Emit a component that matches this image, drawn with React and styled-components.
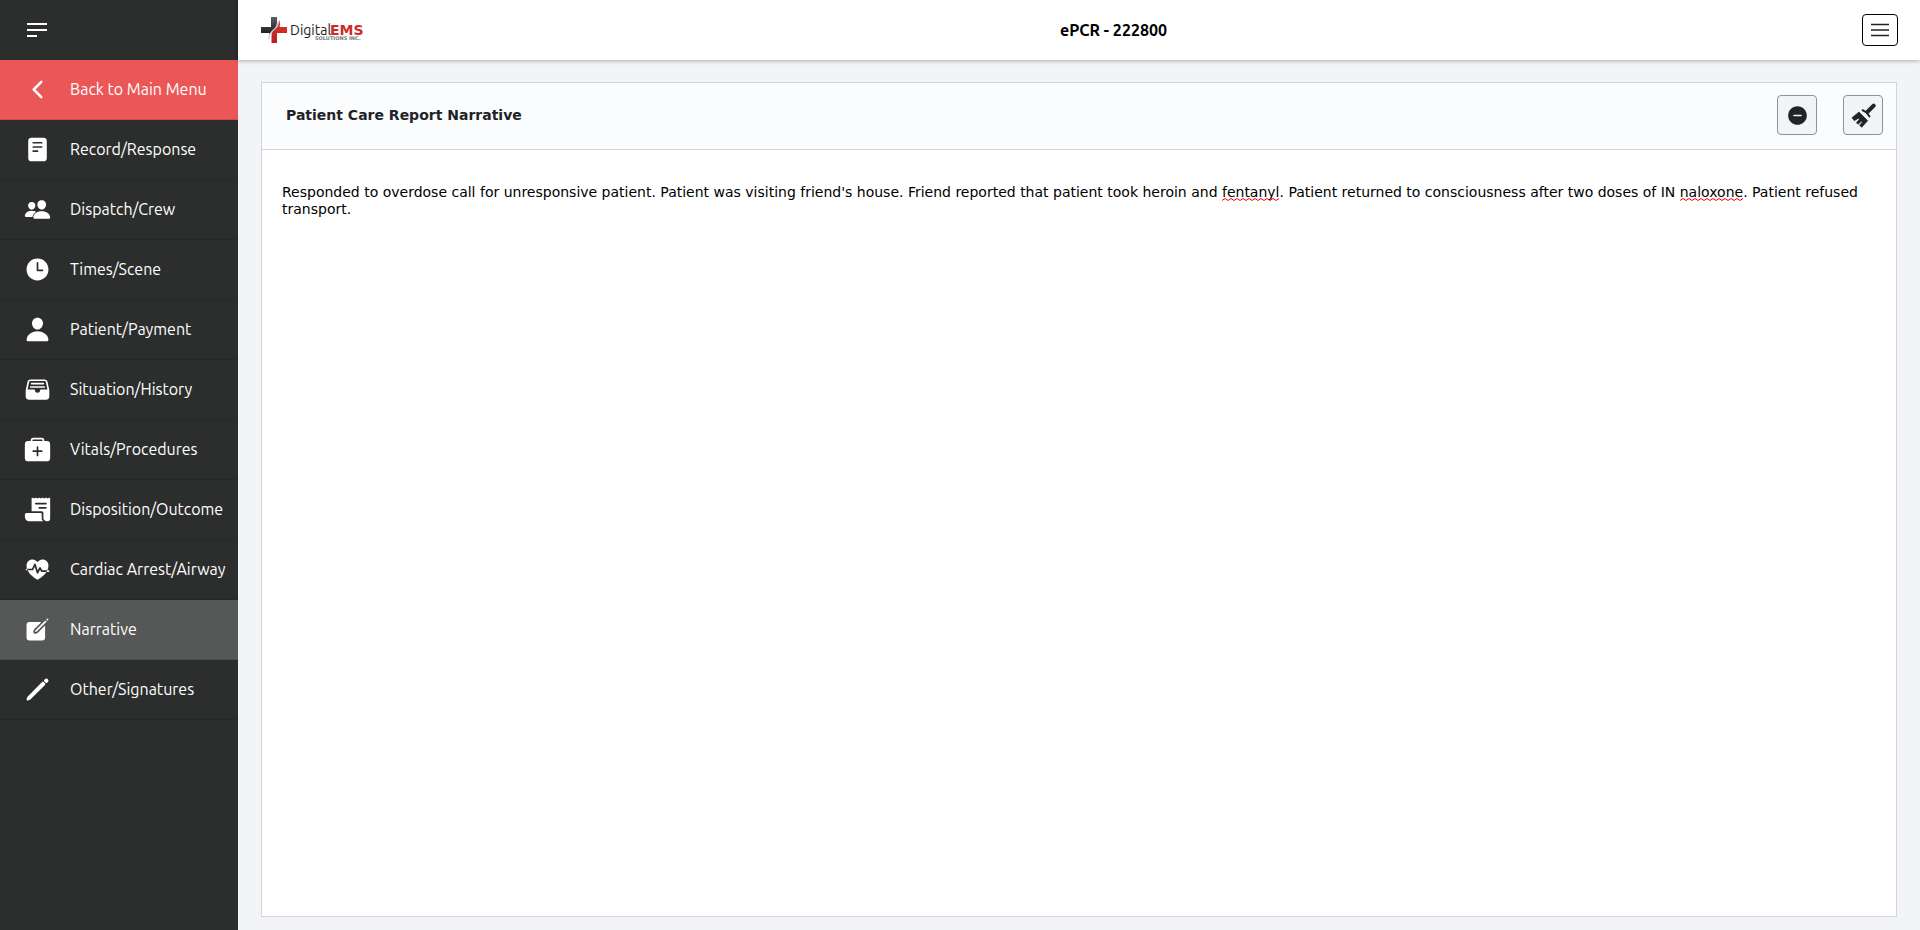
import React, { useLayoutEffect, useRef, useState } from 'react';
import styled, { createGlobalStyle } from 'styled-components';
import {
  IoChevronBack,
  IoCreate,
  IoFileTrayFull,
  IoFitness,
  IoMedkit,
  IoPencil,
  IoPeople,
  IoPerson,
  IoReader,
  IoReceipt,
  IoRemoveCircle,
  IoTime,
} from 'react-icons/io5';

const GlobalStyle = createGlobalStyle`
  *, *::before, *::after { box-sizing: border-box; }
  body {
    margin: 0;
    background: #f3f4f8;
    color: #212327;
    font-family: "DejaVu Sans", Verdana, sans-serif;
    font-size: 14px;
  }
  button { font: inherit; cursor: pointer; }
`;

const Shell = styled.div`
  display: grid;
  grid-template-columns: 238px minmax(0, 1fr);
  min-height: 100vh;
`;

const Sidebar = styled.nav`
  background: #2c2e2d;
  color: #fff;
`;

const CollapseButton = styled.button`
  display: flex;
  align-items: center;
  width: 100%;
  height: 60px;
  padding: 0 27px;
  border: 0;
  background: transparent;
  color: inherit;
`;

const NavList = styled.ul`
  margin: 0;
  padding: 0;
  list-style: none;
`;

const tones = { back: '#eb5757', active: '#565857', plain: 'transparent' };

const NavLink = styled.a`
  display: flex;
  align-items: center;
  gap: 19px;
  height: 60px;
  padding: 0 0 1px 24px;
  border-bottom: 1px solid rgba(0, 0, 0, 0.12);
  background: ${(p) => tones[p.$tone]};
  color: #fff;
  font-family: Ubuntu, Roboto, "Noto Sans", sans-serif;
  font-size: 16px;
  line-height: 24px;
  text-decoration: none;
  white-space: nowrap;

  svg { flex: none; width: 27px; height: 27px; }
`;

const Content = styled.div`
  display: flex;
  flex-direction: column;
  min-width: 0;
`;

const TopBar = styled.header`
  display: flex;
  align-items: center;
  justify-content: space-between;
  height: 60px;
  padding: 0 22px 0 23px;
  background: #fff;
  box-shadow: 0 1px 4px rgba(0, 0, 0, 0.3);
`;

const LogoLink = styled.a`
  display: flex;
`;

const PageTitle = styled.h1`
  margin: 0;
  color: #000;
  font-family: Ubuntu, "Noto Sans", sans-serif;
  font-size: 16px;
  line-height: 24px;
`;

const MenuButton = styled.button`
  display: flex;
  align-items: center;
  justify-content: center;
  width: 36px;
  height: 32px;
  padding: 0;
  border: 1px solid #000;
  border-radius: 4px;
  background: #fff;
  color: #212327;
`;

const Main = styled.main`
  display: flex;
  flex: 1;
  flex-direction: column;
  padding: 22px 23px 13px;
`;

const Card = styled.section`
  display: flex;
  flex: 1;
  flex-direction: column;
`;

const CardHeader = styled.div`
  display: flex;
  align-items: center;
  justify-content: space-between;
  height: 67px;
  padding: 0 13px 2px 24px;
  border: 1px solid #d3d5d8;
  border-bottom: 0;
  background: #fbfcfe;
`;

const CardTitle = styled.h2`
  margin: 0;
  font-size: 14px;
  line-height: 20px;
`;

const Actions = styled.div`
  display: flex;
  gap: 26px;
`;

const ActionButton = styled.button`
  display: flex;
  align-items: center;
  justify-content: center;
  width: 40px;
  height: 40px;
  padding: 0;
  border: 1px solid #8f9199;
  border-radius: 4px;
  background: #f3f4f8;
  color: #212327;
`;

const Editor = styled.div`
  position: relative;
  display: flex;
  flex: 1;
  border: 1px solid #d3d5d8;
  background: #fff;
`;

const NarrativeInput = styled.textarea`
  flex: 1;
  min-width: 0;
  padding: 34px 20px;
  border: 0;
  outline: 0;
  resize: none;
  overflow: hidden;
  background: transparent;
  color: #000;
  font-family: inherit;
  font-size: 14px;
  line-height: 17px;
`;

const SpellingMark = styled.svg`
  position: absolute;
  height: 3px;
  pointer-events: none;
`;

const navItems = [
  { label: 'Back to Main Menu', Icon: IoChevronBack, tone: 'back' },
  { label: 'Record/Response', Icon: IoReader },
  { label: 'Dispatch/Crew', Icon: IoPeople },
  { label: 'Times/Scene', Icon: IoTime },
  { label: 'Patient/Payment', Icon: IoPerson },
  { label: 'Situation/History', Icon: IoFileTrayFull },
  { label: 'Vitals/Procedures', Icon: IoMedkit },
  { label: 'Disposition/Outcome', Icon: IoReceipt },
  { label: 'Cardiac Arrest/Airway', Icon: IoFitness },
  { label: 'Narrative', Icon: IoCreate, tone: 'active' },
  { label: 'Other/Signatures', Icon: IoPencil },
];

const initialNarrative =
  "Responded to overdose call for unresponsive patient. Patient was visiting friend's house. Friend reported that patient took heroin and fentanyl. Patient returned to consciousness after two doses of IN naloxone. Patient refused transport.";

const unknownWords = /fentanyl|naloxone/g;

// Lays the text out in a temporary copy of the field to find where each unknown word falls.
function measureWords(field, text) {
  const style = getComputedStyle(field);
  const copy = document.createElement('div');
  Object.assign(copy.style, {
    position: 'fixed',
    top: '0',
    left: '0',
    visibility: 'hidden',
    width: `${field.offsetWidth}px`,
    padding: style.padding,
    fontFamily: style.fontFamily,
    fontSize: style.fontSize,
    lineHeight: style.lineHeight,
    whiteSpace: 'pre-wrap',
    overflowWrap: 'break-word',
  });
  copy.textContent = text;
  document.body.appendChild(copy);
  const marks = [...text.matchAll(unknownWords)].map((match) => {
    const range = document.createRange();
    range.setStart(copy.firstChild, match.index);
    range.setEnd(copy.firstChild, match.index + match[0].length);
    const box = range.getBoundingClientRect();
    return { left: Math.round(box.left), top: Math.round(box.bottom) - 2, width: Math.round(box.width) };
  });
  copy.remove();
  return marks;
}

function useSpellingMarks(fieldRef, text) {
  const [marks, setMarks] = useState([]);
  useLayoutEffect(() => {
    const field = fieldRef.current;
    const update = () => setMarks(measureWords(field, text));
    update();
    const observer = new ResizeObserver(update);
    observer.observe(field);
    return () => observer.disconnect();
  }, [fieldRef, text]);
  return marks;
}

function Squiggle({ left, top, width }) {
  const points = [];
  for (let x = 0; x <= width; x += 3) points.push(`${x},${(x / 3) % 2 ? 0.5 : 2.5}`);
  return (
    <SpellingMark style={{ left, top, width }} aria-hidden="true">
      <polyline points={points.join(' ')} fill="none" stroke="#f00" strokeWidth="1" />
    </SpellingMark>
  );
}

function Logo() {
  return (
    <svg width="104" height="26" viewBox="0 0 104 26" role="img" aria-label="DigitalEMS Solutions Inc.">
      <defs>
        <linearGradient id="steel" x1="0" y1="0" x2="0" y2="1">
          <stop offset="0" stopColor="#5c5f60" />
          <stop offset="1" stopColor="#1d1f20" />
        </linearGradient>
        <linearGradient id="crimson" x1="0" y1="0" x2="0" y2="1">
          <stop offset="0" stopColor="#e0392f" />
          <stop offset="1" stopColor="#b81d20" />
        </linearGradient>
      </defs>
      <path fill="url(#steel)" d="M10 0h6v5c0 3-1 5-3 7-1.500 1.500-3.500 2.500-4.500 5L8 16H0v-6h10z" />
      <path fill="url(#crimson)" d="M18 3c1.500 3 1 5 .5 7H26v6H16v10h-5.500v-8c0-3 2-4.500 4-6 2-2 3.500-4.500 3.500-9z" />
      <path fill="none" stroke="#8a8d8e" strokeWidth="0.6" d="M8 22c-.5-4 1.500-6 4.500-8.500s4.500-5 4.500-9" />
      <text x="29" y="18" fontFamily="Ubuntu, 'Liberation Sans', sans-serif" fontSize="14" fill="#1b1d1e">Digital</text>
      <text x="69" y="18" fontFamily="'DejaVu Sans', sans-serif" fontSize="14" fontWeight="700" fill="#cf2a27">EMS</text>
      <text x="54" y="23" fontFamily="'DejaVu Sans', sans-serif" fontSize="5" fontWeight="700" fill="#77797a">SOLUTIONS INC.</text>
    </svg>
  );
}

function BroomIcon() {
  return (
    <svg width="25" height="25" viewBox="0 0 75 75" aria-hidden="true">
      <path d="M68 8L52 24" stroke="currentColor" strokeWidth="12" strokeLinecap="round" />
      <path fill="currentColor" d="M46 21L55 30L48 33L43 28z" />
      <path d="M33 20C38 24 43 25 47 29S52 38 57 42" fill="none" stroke="currentColor" strokeWidth="6" />
      <path
        fill="currentColor"
        strokeLinejoin="round"
        stroke="currentColor"
        strokeWidth="2"
        d="M24 27L50 53L32 73L26 67L34 57L31 55L21 64L16 59L25 49L22 46L10 53L3 44z"
      />
    </svg>
  );
}

export default function App() {
  const [narrative, setNarrative] = useState(initialNarrative);
  const fieldRef = useRef(null);
  const marks = useSpellingMarks(fieldRef, narrative);

  return (
    <>
      <GlobalStyle />
      <Shell>
        <Sidebar aria-label="Report sections">
          <CollapseButton type="button" aria-label="Collapse menu">
            <svg width="20" height="14" viewBox="0 0 20 14" fill="currentColor" aria-hidden="true">
              <path d="M0 0h20v2H0zM0 6h20v2H0zM0 12h10v2H0z" />
            </svg>
          </CollapseButton>
          <NavList>
            {navItems.map(({ label, Icon, tone = 'plain' }) => (
              <li key={label}>
                <NavLink href="#" $tone={tone} aria-current={tone === 'active' ? 'page' : undefined}>
                  <Icon aria-hidden="true" />
                  {label}
                </NavLink>
              </li>
            ))}
          </NavList>
        </Sidebar>
        <Content>
          <TopBar>
            <LogoLink href="#">
              <Logo />
            </LogoLink>
            <PageTitle>ePCR - 222800</PageTitle>
            <MenuButton type="button" aria-label="Open menu">
              <svg width="18" height="14" viewBox="0 0 18 14" stroke="currentColor" strokeWidth="1.6" aria-hidden="true">
                <path d="M0 1.500h18M0 7h18M0 12.500h18" />
              </svg>
            </MenuButton>
          </TopBar>
          <Main>
            <Card>
              <CardHeader>
                <CardTitle id="narrative-title">Patient Care Report Narrative</CardTitle>
                <Actions>
                  <ActionButton type="button" aria-label="Collapse narrative">
                    <IoRemoveCircle size={23} />
                  </ActionButton>
                  <ActionButton type="button" aria-label="Clear narrative" onClick={() => setNarrative('')}>
                    <BroomIcon />
                  </ActionButton>
                </Actions>
              </CardHeader>
              <Editor>
                <NarrativeInput
                  ref={fieldRef}
                  aria-labelledby="narrative-title"
                  spellCheck={false}
                  value={narrative}
                  onChange={(event) => setNarrative(event.target.value)}
                />
                {marks.map((mark) => (
                  <Squiggle key={`${mark.left}-${mark.top}`} {...mark} />
                ))}
              </Editor>
            </Card>
          </Main>
        </Content>
      </Shell>
    </>
  );
}
